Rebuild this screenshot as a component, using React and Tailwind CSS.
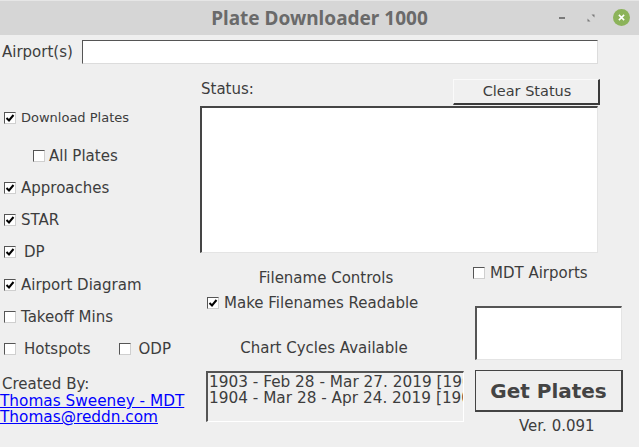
import React from "react";

const font = { fontFamily: '"DejaVu Sans", sans-serif' };

function Box({ checked }) {
  return (
    <span className="relative inline-block w-[12px] h-[12px] shrink-0 bg-white border-t border-l border-[#555] border-r border-b border-r-[#cfcfcf] border-b-[#cfcfcf]">
      {checked && (
        <svg viewBox="0 0 10 10" className="absolute left-[0px] top-[0px] w-[10px] h-[10px]">
          <path d="M1.5 5 L4 7.5 L8.5 2" stroke="#000" strokeWidth="2" fill="none" />
        </svg>
      )}
    </span>
  );
}

function Check({ checked, label, gap = "ml-[5px]", small }) {
  return (
    <div className="flex items-center">
      <Box checked={checked} />
      <span className={`${gap} ${small ? "text-[13px]" : "text-[15px]"} whitespace-nowrap`}>{label}</span>
    </div>
  );
}

export default function App() {
  return (
    <div className="w-[639px] h-[447px] overflow-hidden bg-[#efefef] text-[#3d3d3d]" style={font}>
      {/* title bar */}
      <div className="relative h-[35px] bg-[#d6d6d6] border-t border-[#e6e6e6] flex items-center justify-center">
        <span className="text-[19px] font-bold text-[#6a6a6a]" style={{ fontFamily: '"Noto Sans", sans-serif' }}>
          Plate Downloader 1000
        </span>
        <div className="absolute right-[9px] top-[8px] flex items-center">
          <span className="block w-[6px] h-[2px] bg-[#7a7a7a] mr-[22px]" />
          <svg viewBox="0 0 8 8" className="w-[8px] h-[8px] mr-[18px]">
            <path d="M4.5 0.5 H7.5 V3.5 Z M3.5 7.5 H0.5 V4.5 Z" fill="#7a7a7a" />
          </svg>
          <span className="flex items-center justify-center w-[17px] h-[17px] rounded-full bg-[#8cb35a]">
            <svg viewBox="0 0 8 8" className="w-[7px] h-[7px]">
              <path d="M1 1 L7 7 M7 1 L1 7" stroke="#fff" strokeWidth="1.8" />
            </svg>
          </span>
        </div>
      </div>

      {/* airport row */}
      <div className="flex items-center h-[24px] mt-[5px]">
        <span className="pl-[2px] text-[15px] w-[82px]">Airport(s)</span>
        <div className="w-[516px] h-[24px] bg-white border-t border-l border-[#555] border-r border-b border-r-[#dcdcdc] border-b-[#dcdcdc]" />
      </div>

      <div className="flex">
        {/* left column */}
        <div className="w-[200px] pt-[38px]">
          <div className="h-[32px] flex items-center pl-[4px]">
            <Check checked label="Download Plates" small />
          </div>
          <div className="h-[32px] mt-[6px] flex items-center pl-[33px]">
            <Check label="All Plates" gap="ml-[4px]" />
          </div>
          <div className="h-[32px] flex items-center pl-[4px]">
            <Check checked label="Approaches" />
          </div>
          <div className="h-[32px] flex items-center pl-[4px]">
            <Check checked label="STAR" />
          </div>
          <div className="h-[32px] flex items-center pl-[4px]">
            <Check checked label="DP" gap="ml-[8px]" />
          </div>
          <div className="h-[32px] mt-[1px] flex items-center pl-[4px]">
            <Check checked label="Airport Diagram" />
          </div>
          <div className="h-[32px] flex items-center pl-[4px]">
            <Check label="Takeoff Mins" />
          </div>
          <div className="h-[32px] flex items-center pl-[4px]">
            <Check label="Hotspots" gap="ml-[8px]" />
            <div className="ml-[28px]">
              <Check label="ODP" gap="ml-[8px]" />
            </div>
          </div>
          <div className="mt-[10px] pl-[2px] text-[15px] leading-[18px]">Created By:</div>
          <div className="text-[15.3px] leading-[16px] text-[#0000ff] underline whitespace-nowrap">Thomas Sweeney - MDT</div>
          <div className="text-[15.3px] leading-[16px] text-[#0000ff] underline">Thomas@reddn.com</div>
        </div>

        {/* right area */}
        <div className="w-[439px]">
          <div className="flex items-start mt-[15px] w-[400px]">
            <span className="pl-[1px] text-[15px] leading-[21px]">Status:</span>
            <button className="ml-auto w-[147px] h-[26px] bg-[#f0f0f0] border-t border-l border-[#fafafa] border-r-2 border-b-2 border-r-[#3a3a3a] border-b-[#3a3a3a] text-[14.5px] text-[#3d3d3d] pl-[2px] pt-[1px]">
              Clear Status
            </button>
          </div>
          <div className="mt-[1px] w-[398px] h-[147px] bg-white border-t-2 border-l-2 border-[#454545] border-r border-b border-r-[#e4e4e4] border-b-[#e4e4e4]" />

          <div className="flex">
            <div className="w-[270px]">
              <div className="mt-[15px] h-[20px] leading-[20px] text-[15px] text-center pr-[18px]">Filename Controls</div>
              <div className="mt-[5px] h-[20px] flex items-center pl-[7px]">
                <Check checked label="Make Filenames Readable" />
              </div>
              <div className="mt-[25px] h-[20px] leading-[20px] text-[15px] text-center pr-[22px]">Chart Cycles Available</div>
              <div className="mt-[13px] ml-[6px] w-[258px] h-[51px] overflow-hidden bg-[#efefef] border-t-2 border-l-2 border-[#555] border-r border-b border-r-white border-b-white pl-[1px] pt-[1px]">
                <div className="text-[15.3px] leading-[16px] whitespace-nowrap">1903 - Feb 28 - Mar 27. 2019 [1903]</div>
                <div className="text-[15.3px] leading-[16px] whitespace-nowrap">1904 - Mar 28 - Apr 24. 2019 [1904]</div>
              </div>
            </div>
            <div className="w-[169px]">
              <div className="mt-[10px] h-[20px] flex items-center pl-[3px]">
                <Check label="MDT Airports" />
              </div>
              <div className="mt-[23px] ml-[5px] w-[147px] h-[54px] bg-white border-t-2 border-l-2 border-[#555] border-r border-b border-r-[#e4e4e4] border-b-[#e4e4e4]" />
              <button className="mt-[10px] ml-[5px] w-[148px] h-[42px] bg-[#efefef] border border-[#444] border-r-2 border-b-2 text-[20px] font-bold text-[#444] flex items-center justify-center">
                Get Plates
              </button>
              <div className="mt-[4px] ml-[49px] h-[20px] leading-[20px] text-[15px]">Ver. 0.091</div>
            </div>
          </div>
        </div>
      </div>
    </div>
  );
}
